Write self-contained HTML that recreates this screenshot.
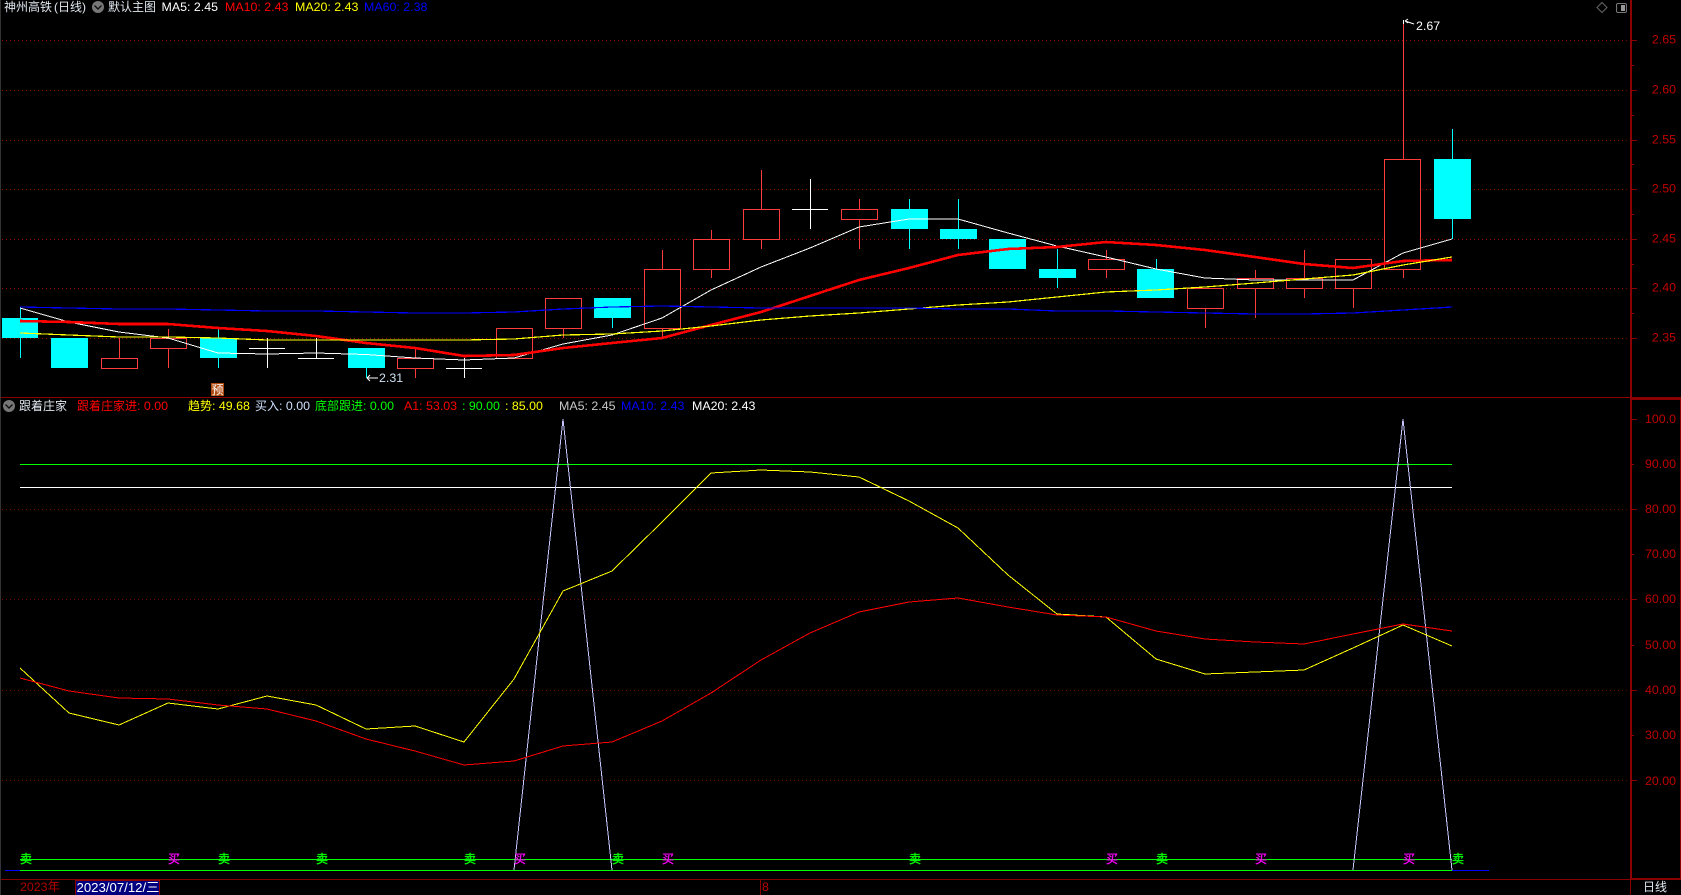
<!DOCTYPE html>
<html><head><meta charset="utf-8"><title>神州高铁</title>
<style>
html,body{margin:0;padding:0;background:#000;width:1681px;height:895px;overflow:hidden}
svg{display:block}
text{font-family:"Liberation Sans","Noto Sans CJK SC",sans-serif;font-size:12.4px;white-space:pre}
tspan.c{font-size:12px}
.ax{fill:#c00000;text-anchor:end}
.sig{font-size:12px;stroke-width:.35}
</style></head><body>
<svg width="1681" height="895" viewBox="0 0 1681 895" xmlns="http://www.w3.org/2000/svg">
<rect width="1681" height="895" fill="#000"/>
<rect x="0" y="0" width="1" height="895" fill="#333"/>
<g shape-rendering="crispEdges">
<!-- grids -->
<g stroke="#8b0000" stroke-width="1" stroke-dasharray="1 3" fill="none">
<path d="M2 40.5H1630M2 90.5H1630M2 140.5H1630M2 189.5H1630M2 239.5H1630M2 288.5H1630M2 338.5H1630"/>
<path stroke="#700000" d="M2 509.5H1630M2 599.5H1630M2 690.5H1630M2 780.5H1630"/>
</g>
<!-- frame -->
<g fill="#8b0000">
<rect x="1" y="397" width="1680" height="1"/>
<rect x="1630" y="0" width="2" height="879"/>
<rect x="1630" y="879" width="1" height="16"/>
<rect x="1630" y="398" width="51" height="2"/>
<rect x="1630" y="878" width="51" height="2"/>
<rect x="1" y="879" width="1680" height="1"/>
<rect x="1680" y="398" width="1" height="481"/>
<path d="M1632 40h5v1h-5zM1632 90h5v1h-5zM1632 140h5v1h-5zM1632 189h5v1h-5zM1632 239h5v1h-5zM1632 288h5v1h-5zM1632 338h5v1h-5zM1632 65h2v1h-2zM1632 115h2v1h-2zM1632 164h2v1h-2zM1632 214h2v1h-2zM1632 264h2v1h-2zM1632 313h2v1h-2z"/>
<path d="M1632 419h5v1h-5zM1632 464h2v1h-2zM1632 509h5v1h-5zM1632 554h2v1h-2zM1632 599h5v1h-5zM1632 645h2v1h-2zM1632 690h5v1h-5zM1632 735h2v1h-2zM1632 780h5v1h-5z"/>
<rect x="760" y="880" width="1" height="15"/>
</g>
<!-- wicks red -->
<path fill="none" stroke="#ff3c3c" d="M119.5 338V358M168.5 329V368M415.5 349V378M563.5 338V328M662.5 250V338M711.5 230V278M761.5 170V249M859.5 199V249M1106.5 250V278M1205.5 308V328M1255.5 270V318M1304.5 250V298M1353.5 288V308M1403.5 20V278"/>
<!-- wicks cyan -->
<path fill="none" stroke="#00ffff" d="M20.5 308V358M218.5 329V368M366.5 368V378M612.5 318V328M909.5 199V249M958.5 199V249M1057.5 249V288M1156.5 259V269M1452.5 129V239"/>
<!-- crosses -->
<path fill="none" stroke="#fff" d="M267.5 338V368M249 348.5H285M316.5 338V358M298 358.5H334M464.5 358V378M446 368.5H482M810.5 179V229M792 209.5H828"/>
<!-- red hollow bodies -->
<g fill="#000" stroke="#ff3c3c">
<rect x="101.5" y="358.5" width="36" height="10"/>
<rect x="150.5" y="338.5" width="36" height="10"/>
<rect x="397.5" y="358.5" width="36" height="10"/>
<rect x="496.5" y="328.5" width="36" height="30"/>
<rect x="545.5" y="298.5" width="36" height="30"/>
<rect x="644.5" y="269.5" width="36" height="59"/>
<rect x="693.5" y="239.5" width="36" height="30"/>
<rect x="743.5" y="209.5" width="36" height="30"/>
<rect x="841.5" y="209.5" width="36" height="10"/>
<rect x="1088.5" y="259.5" width="36" height="10"/>
<rect x="1187.5" y="288.5" width="36" height="20"/>
<rect x="1237.5" y="278.5" width="36" height="10"/>
<rect x="1286.5" y="278.5" width="36" height="10"/>
<rect x="1335.5" y="259.5" width="36" height="29"/>
<rect x="1384.5" y="159.5" width="36" height="110"/>
</g>
<!-- cyan bodies -->
<g fill="#00ffff">
<rect x="2" y="318" width="36" height="20"/>
<rect x="51" y="338" width="37" height="30"/>
<rect x="200" y="338" width="37" height="20"/>
<rect x="348" y="348" width="37" height="20"/>
<rect x="594" y="298" width="37" height="20"/>
<rect x="891" y="209" width="37" height="20"/>
<rect x="940" y="229" width="37" height="10"/>
<rect x="989" y="239" width="37" height="30"/>
<rect x="1039" y="269" width="37" height="9"/>
<rect x="1137" y="269" width="37" height="29"/>
<rect x="1434" y="159" width="37" height="60"/>
</g>
<!-- MA lines -->
<g fill="none">
<polyline stroke="#fff" stroke-width="1" points="20,308 69,322 119,332 168,338 218,353 267,354 316,353 366,354.5 415,358 464,360 514,358 563,344 612,335 662,318 711,290 761,267 810,248 859,227 909,219 958,219 1008,233 1057,246 1106,257 1156,269 1205,278 1255,280 1304,280 1353,280 1403,253 1452,239"/>
<polyline stroke="#f00" stroke-width="2.6" points="20,321 69,322 119,324 168,324 218,328 267,331 316,336 366,343 415,348 464,356 514,355 563,348 612,343 662,338 711,325 761,312 810,296 859,280 909,268 958,255 1008,249 1057,247 1106,242 1156,245 1205,250 1255,257 1304,264 1353,268 1403,261 1452,260"/>
<polyline stroke="#ff0" stroke-width="1.2" points="20,333 69,335 119,337 168,337 218,338 267,340 316,340 366,340 415,340 464,340 514,339 563,335 612,334 662,331 711,326 761,320 810,316 859,313 909,309 958,305 1008,302 1057,297 1106,292 1156,290 1205,287 1255,283 1304,279 1353,275 1403,265 1452,257"/>
<polyline stroke="#00f" stroke-width="1.2" points="20,307 69,308 119,309 168,309 218,310 267,311 316,311 366,312 415,313 464,313 514,312 563,309 612,307 662,306 711,307 761,308 810,308 859,308 909,308 958,309 1008,309 1057,311 1106,311 1156,312 1205,313 1255,314 1304,314 1353,313 1403,310 1452,307"/>
<!-- lower panel -->
<path stroke="#0f0" stroke-width="1" d="M20 464.5H1452M20 859.5H1452"/>
<path stroke="#fff" stroke-width="1" d="M20 487.5H1452"/>
<path stroke="#0f0" stroke-width="1" d="M20 870.5H1452"/>
<path stroke="#00f" stroke-width="1" d="M5 870.5H20M1452 870.5H1489"/>
<polyline stroke="#c8c8ff" stroke-width="1" points="514,870 563,419 612,870"/>
<polyline stroke="#c8c8ff" stroke-width="1" points="1353,870 1403,419 1452,870"/>
<polyline stroke="#ff0" stroke-width="1" points="20,668 69,713 119,725 168,703 218,709 267,696 316,705 366,729 415,726 464,742 514,679 563,591 612,571 662,522 711,473 761,470 810,472 859,477 909,501 958,528 1008,575 1057,614 1106,617 1156,659 1205,674 1255,672 1304,670 1353,648 1403,625 1452,646"/>
<polyline stroke="#f00" stroke-width="1" points="20,678 69,691 119,698 168,699 218,705 267,709 316,721 366,739 415,751 464,765 514,761 563,746 612,742 662,721 711,693 761,660 810,633 859,612 909,602 958,598 1008,607 1057,615 1106,617 1156,631 1205,639 1255,642 1304,644 1353,634 1403,624 1452,631"/>
</g>
<!-- date box -->
<rect x="75.5" y="880.5" width="84" height="15" fill="#00007f" stroke="#8b0000"/>
</g>
<!-- header 1 -->
<text x="4" y="11" fill="#e0e8f0" style="font-size:12px">神州高铁<tspan dx="2">(日线)</tspan></text>
<circle cx="98" cy="7" r="6" fill="#777"/>
<path d="M94.5 5.5L98 9L101.5 5.5" fill="none" stroke="#111" stroke-width="1.4"/>
<text x="108" y="11" fill="#e0e8f0" style="font-size:12px">默认主图</text>
<text x="161.5" y="11" fill="#fff">MA5: 2.45</text>
<text x="225" y="11" fill="#f00">MA10: 2.43</text>
<text x="295" y="11" fill="#ff0">MA20: 2.43</text>
<text x="364" y="11" fill="#00f">MA60: 2.38</text>
<path d="M1602 2.5L1607 7.5L1602 12.5L1597 7.5Z" fill="none" stroke="#666"/>
<rect x="1616.5" y="3.5" width="10" height="9" rx="1.5" fill="none" stroke="#777"/>
<rect x="1621" y="5" width="4" height="6" fill="#999"/>
<!-- axis labels -->
<g class="ax">
<text class="ax" x="1676" y="43.5">2.65</text>
<text class="ax" x="1676" y="93.5">2.60</text>
<text class="ax" x="1676" y="143.5">2.55</text>
<text class="ax" x="1676" y="192.5">2.50</text>
<text class="ax" x="1676" y="242.5">2.45</text>
<text class="ax" x="1676" y="291.5">2.40</text>
<text class="ax" x="1676" y="341.5">2.35</text>
<text class="ax" x="1676" y="423">100.0</text>
<text class="ax" x="1676" y="468">90.00</text>
<text class="ax" x="1676" y="513">80.00</text>
<text class="ax" x="1676" y="558">70.00</text>
<text class="ax" x="1676" y="603">60.00</text>
<text class="ax" x="1676" y="649">50.00</text>
<text class="ax" x="1676" y="694">40.00</text>
<text class="ax" x="1676" y="739">30.00</text>
<text class="ax" x="1676" y="785">20.00</text>
</g>
<!-- price marks -->
<path d="M1414 24L1405 21M1405 21L1408 19M1405 21L1408 23M1403.5 20V24" fill="none" stroke="#fff" stroke-width="1"/>
<text x="1416" y="30" fill="#fff">2.67</text>
<path d="M378 378H367M367 378L370 375M367 378L370 381" fill="none" stroke="#fff" stroke-width="1"/>
<text x="379" y="382" fill="#cfe0f0">2.31</text>
<rect x="211" y="383" width="13" height="13" fill="#b04a10"/>
<text x="211.5" y="394" fill="#fff" style="font-size:12px">预</text>
<!-- header 2 -->
<circle cx="9" cy="406" r="6" fill="#777"/>
<path d="M5.5 404.5L9 408L12.5 404.5" fill="none" stroke="#111" stroke-width="1.4"/>
<text x="19" y="410" fill="#e0e8f0" style="font-size:12px">跟着庄家</text>
<text x="77" y="410" fill="#f00"><tspan class="c">跟着庄家进</tspan>: 0.00</text>
<text x="188" y="410" fill="#ff0"><tspan class="c">趋势</tspan>: 49.68</text>
<text x="255" y="410" fill="#cfe0ff"><tspan class="c">买入</tspan>: 0.00</text>
<text x="315" y="410" fill="#0f0"><tspan class="c">底部跟进</tspan>: 0.00</text>
<text x="404" y="410" fill="#f00">A1: 53.03</text>
<text x="462" y="410" fill="#0f0">: 90.00</text>
<text x="505" y="410" fill="#ff0">: 85.00</text>
<text x="559" y="410" fill="#c8c8c8">MA5: 2.45</text>
<text x="621" y="410" fill="#00f">MA10: 2.43</text>
<text x="692" y="410" fill="#fff">MA20: 2.43</text>
<!-- signals -->
<text class="sig" x="20" y="863" fill="#0f0" stroke="#0f0">卖</text>
<text class="sig" x="168" y="863" fill="#f0f" stroke="#f0f">买</text>
<text class="sig" x="218" y="863" fill="#0f0" stroke="#0f0">卖</text>
<text class="sig" x="316" y="863" fill="#0f0" stroke="#0f0">卖</text>
<text class="sig" x="464" y="863" fill="#0f0" stroke="#0f0">卖</text>
<text class="sig" x="514" y="863" fill="#f0f" stroke="#f0f">买</text>
<text class="sig" x="612" y="863" fill="#0f0" stroke="#0f0">卖</text>
<text class="sig" x="662" y="863" fill="#f0f" stroke="#f0f">买</text>
<text class="sig" x="909" y="863" fill="#0f0" stroke="#0f0">卖</text>
<text class="sig" x="1106" y="863" fill="#f0f" stroke="#f0f">买</text>
<text class="sig" x="1156" y="863" fill="#0f0" stroke="#0f0">卖</text>
<text class="sig" x="1255" y="863" fill="#f0f" stroke="#f0f">买</text>
<text class="sig" x="1403" y="863" fill="#f0f" stroke="#f0f">买</text>
<text class="sig" x="1452" y="863" fill="#0f0" stroke="#0f0">卖</text>
<!-- bottom -->
<text x="20" y="891" fill="#b00000">2023年</text>
<text x="76.5" y="892" fill="#fff" style="font-size:13.2px">2023/07/12/三</text>
<text x="762" y="891" fill="#c00000">8</text>
<text x="1643" y="891" fill="#e0e8f0" style="font-size:12px">日线</text>
</svg>
</body></html>
